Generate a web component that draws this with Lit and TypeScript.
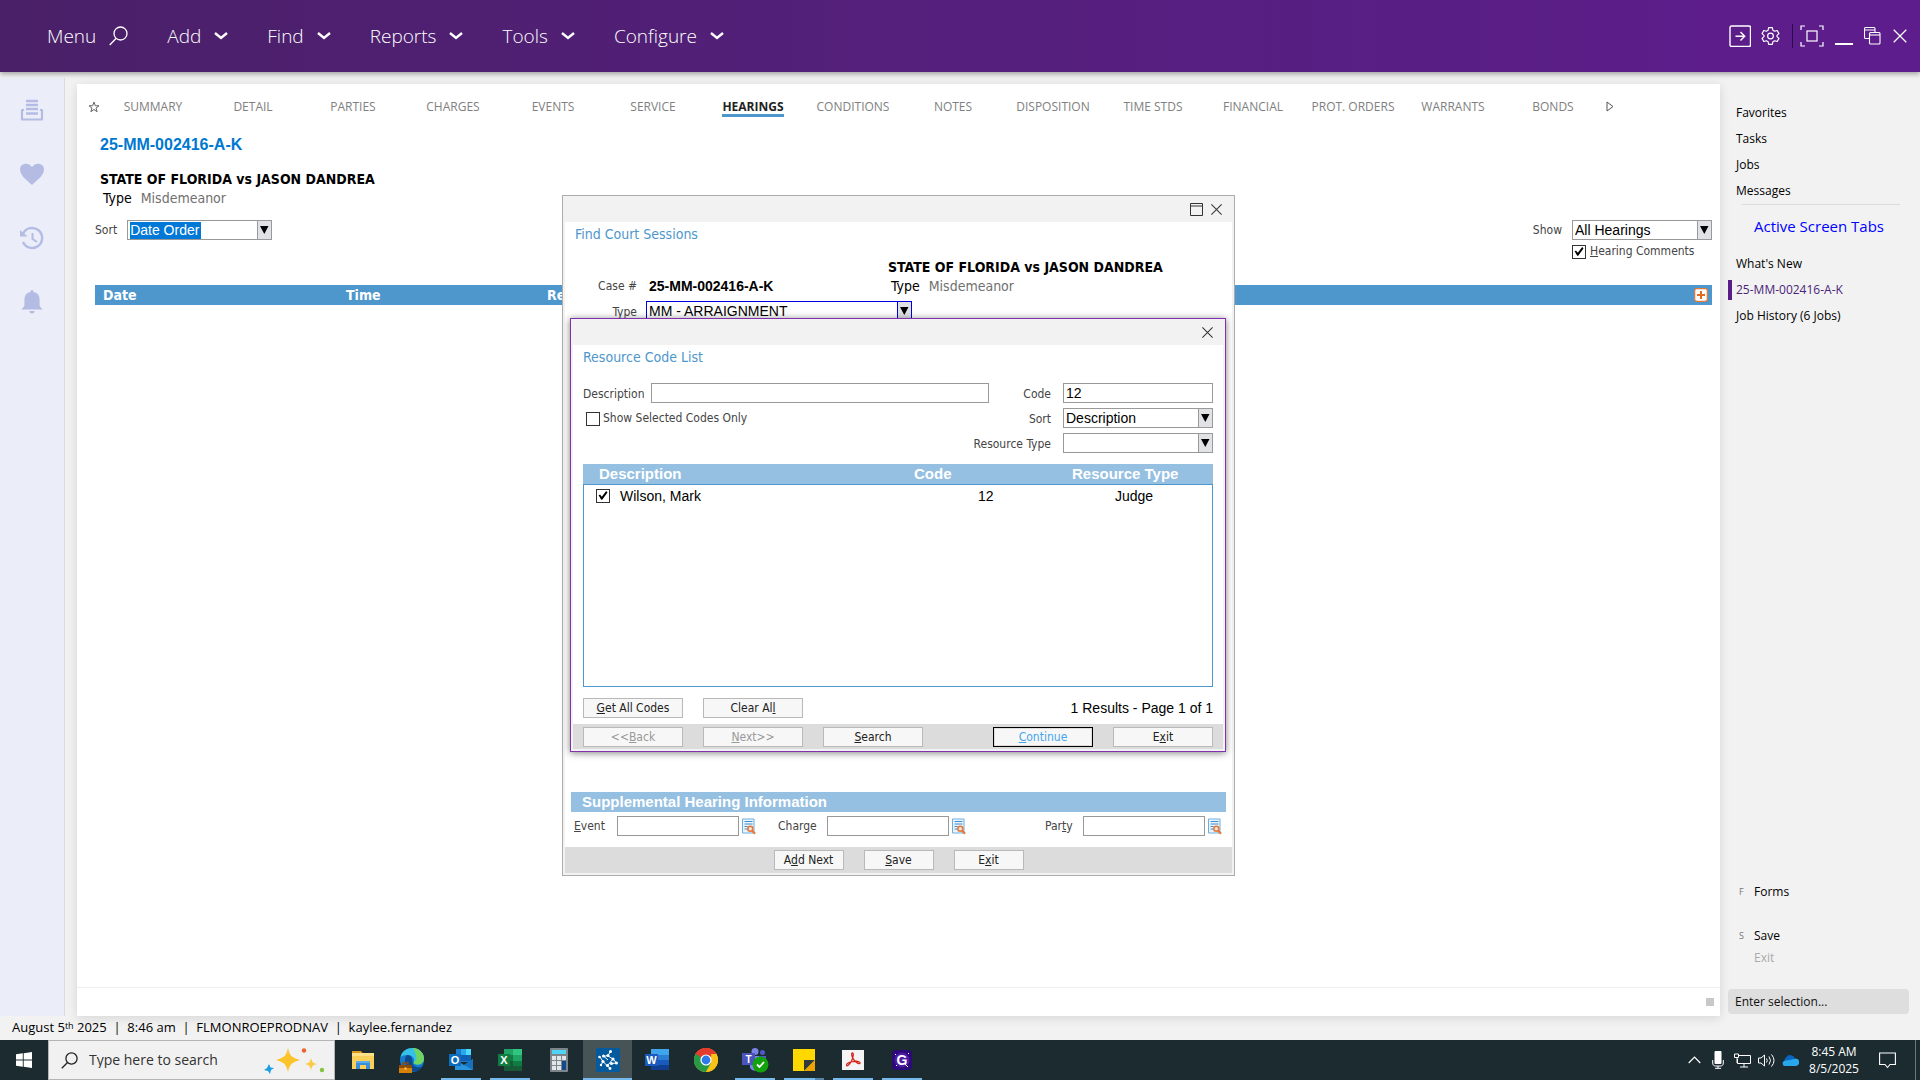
import { LitElement, html, css, svg } from "lit";
import { customElement, state } from "lit/decorators.js";
import { classMap } from "lit/directives/class-map.js";

const MENUS = ["Add", "Find", "Reports", "Tools", "Configure"];
const TABS = [
  "SUMMARY", "DETAIL", "PARTIES", "CHARGES", "EVENTS", "SERVICE", "HEARINGS", "CONDITIONS",
  "NOTES", "DISPOSITION", "TIME STDS", "FINANCIAL", "PROT. ORDERS", "WARRANTS", "BONDS",
];

const closeIcon = (size: number) => svg`<svg width=${size} height=${size} viewBox="0 0 14 14" fill="none" stroke="currentColor" stroke-width="1.1"><path d="M1.5 1.5l11 11M12.5 1.5l-11 11"/></svg>`;

const chevron = html`<svg width="14" height="10" viewBox="0 0 14 10" fill="none" stroke="currentColor" stroke-width="2.4"><path d="M1 2l6 5 6-5"/></svg>`;

const lookupIcon = html`<svg width="15" height="17" viewBox="0 0 15 17" fill="none">
  <path d="M1.5 1h11.5v14H1.5z" fill="#eaf4fc" stroke="#6aaee0"/>
  <path d="M3.5 3.5h8M3.5 6h8M3.5 8.5h3M3.5 11h3" stroke="#3f8fcb" stroke-width="1.2"/>
  <circle cx="9.3" cy="10.8" r="2.5" fill="#fbe3d6" stroke="#e5793c" stroke-width="1.6"/>
  <path d="M11 12.6l3 3.2" stroke="#e5793c" stroke-width="2.2"/></svg>`;

const railIcons = [
  html`<svg width="24" height="24" viewBox="0 0 24 24" fill="none"><path d="M6 3h12M6 7h12M6 11h12M6 15.500h12" stroke="currentColor" stroke-width="2.300"/><path d="M4 12H2v9.500h20V12h-2" stroke="currentColor" stroke-width="2.200" stroke-linejoin="round"/></svg>`,
  html`<svg width="26" height="24" viewBox="0 0 26 24" fill="currentColor"><path d="M13 23C9 19 1 14 1 7.500 1 1 9.500-.5 13 5 16.500-.5 25 1 25 7.500 25 14 17 19 13 23z"/></svg>`,
  html`<svg width="26" height="24" viewBox="0 0 26 24" fill="none" stroke="currentColor" stroke-width="2.400"><path d="M4.200 7.500A10 10 0 1 1 4 16"/><path d="M1 4v6.500h7.500z" fill="currentColor" stroke="none"/><path d="M13.500 7v6l4.500 3" stroke-width="2"/></svg>`,
  html`<svg width="24" height="26" viewBox="0 0 24 26" fill="currentColor"><path d="M12 1c1 0 1.600.7 1.600 2 4 .8 6 3.500 6 8v6l3 3.500H1.400l3-3.500v-6c0-4.500 2-7.200 6-8 0-1.300.6-2 1.600-2zM9.500 22h5a2.500 2.500 0 0 1-5 0z"/></svg>`,
];

const appIcons = {
  files: html`<svg width="24" height="24" viewBox="0 0 24 24"><path d="M1 3h9l2 2.500H1z" fill="#d99a1b"/><path d="M1 5h22v16H1z" fill="#fccf5b"/><path d="M1 5h22v3H1z" fill="#ffe08a"/><path d="M5 21v-8h14v8h-4v-4H9v4z" fill="#3b8fd8"/><path d="M5 13h14v2H5z" fill="#5badea"/></svg>`,
  edge: html`<svg width="26" height="26" viewBox="0 0 26 26"><circle cx="13" cy="13" r="12" fill="#1679c9"/><path d="M1.500 10C3 4 8 1 13.500 1 20 1 25 6 25 11.500c0 4-3 6-6.500 6-3 0-4.500-1.300-3.500-3 1-4-3-7-7-6.500-3 .3-5.500 1-6.500 2z" fill="#35c1e8"/><path d="M14 1c6.500.5 11 5 11 10.500 0 4-3 6-6.500 6-3 0-4.500-1.300-3.500-3 3 0 4-4-1-13.500z" fill="#6fd55f"/><path d="M8 8c-4 4-3 13 6 16.500 4 .6 8-2 9.500-5-5 2-10 0-10-4C13 12 13 8 8 8z" fill="#0c4a8f"/><path d="M0 18h13v8H0z" fill="#d98008"/><path d="M0 18h13v3H0z" fill="#8a4b08"/><path d="M4 18v-2h5v2" fill="none" stroke="#8a4b08" stroke-width="1.300"/><path d="M5.500 20.500h2v2h-2z" fill="#ffd76a"/></svg>`,
  outlook: html`<svg width="26" height="26" viewBox="0 0 26 26"><path d="M8 2h15v13H8z" fill="#1a7ad0"/><path d="M13 2h5v6h-5z" fill="#28a8ea"/><path d="M18 2h5v6h-5z" fill="#50d9ff"/><path d="M13 8h10v6H13z" fill="#0f5fb4"/><path d="M7 12l9 6 9-6v11H7z" fill="#2a94dd"/><path d="M25 12v11l-9-5z" fill="#1672bd"/><path d="M1 7h12v12H1z" fill="#0f6cbd"/><text x="7" y="17" text-anchor="middle" font-size="11" font-weight="700" font-family="Liberation Sans,sans-serif" fill="#fff">O</text></svg>`,
  excel: html`<svg width="26" height="26" viewBox="0 0 26 26"><path d="M7 2h18v22H7z" fill="#21a366"/><path d="M16 2h9v6h-9z" fill="#33c481"/><path d="M7 8h9v6H7z" fill="#107c41"/><path d="M7 14h18v10H7z" fill="#185c37"/><path d="M16 14h9v5h-9z" fill="#107c41"/><path d="M1 7h12v12H1z" fill="#107c41"/><text x="7" y="17" text-anchor="middle" font-size="11" font-weight="700" font-family="Liberation Sans,sans-serif" fill="#fff">X</text></svg>`,
  calc: html`<svg width="20" height="26" viewBox="0 0 20 26"><rect x="1" y="1" width="18" height="24" rx="1" fill="#7c858c"/><path d="M3 3h14v4H3z" fill="#4fd3f7"/><path d="M3 9h4v4H3zM8 9h4v4H8zM13 9h4v4h-4zM3 14h4v4H3zM8 14h4v4H8zM3 19h4v4H3zM8 19h4v4H8z" fill="#e3e6e8"/><path d="M13 14h4v9h-4z" fill="#124a8c"/></svg>`,
  court: html`<svg width="24" height="24" viewBox="0 0 24 24"><path d="M0 0h24v24H0z" fill="#045a9c"/><path d="M14.500 3.500L12 7.500l-4.500 1M8 8.500l4 3.500M4 9l3 4.500 4 4M12 8l5 3 3.500 4-5 .5M17 11l-5.500 6.500L14 20.500M7 13.500L5 17" fill="none" stroke="#fff" stroke-width="1"/><g fill="#fff"><circle cx="14.500" cy="3.500" r="1.500"/><circle cx="12" cy="7.500" r="1.500"/><circle cx="7.500" cy="8" r="1.500"/><circle cx="3.500" cy="9" r="1.300"/><circle cx="7" cy="13.500" r="1.600"/><circle cx="17" cy="11" r="1.600"/><circle cx="20.500" cy="15" r="1.500"/><circle cx="15.500" cy="15.500" r="1.600"/><circle cx="11.500" cy="17.500" r="1.600"/><circle cx="5" cy="17" r="1.200"/><circle cx="14" cy="20.500" r="1.400"/></g></svg>`,
  word: html`<svg width="26" height="26" viewBox="0 0 26 26"><path d="M7 2h18v6H7z" fill="#41a5ee"/><path d="M7 8h18v5H7z" fill="#2b7cd3"/><path d="M7 13h18v5H7z" fill="#185abd"/><path d="M7 18h18v5H7z" fill="#103f91"/><path d="M1 7h13v12H1z" fill="#185abd"/><text x="7.500" y="17" text-anchor="middle" font-size="11" font-weight="700" font-family="Liberation Sans,sans-serif" fill="#fff">W</text></svg>`,
  chrome: html`<svg width="24" height="24" viewBox="0 0 24 24"><circle cx="12" cy="12" r="12" fill="#fbc116"/><path d="M12 12L1.600 6A12 12 0 0 1 22.400 6z" fill="#e33b2e"/><path d="M12 6h10.400A12 12 0 0 0 1.600 6L7 15z" fill="#e33b2e"/><path d="M1.600 6A12 12 0 0 0 12 24l5.200-9L12 12z" fill="#269a45"/><path d="M22.400 6A12 12 0 0 1 12 24l5.200-9V6z" fill="#fbc116"/><circle cx="12" cy="12" r="5.600" fill="#fff"/><circle cx="12" cy="12" r="4.400" fill="#2f79e8"/></svg>`,
  teams: html`<svg width="28" height="26" viewBox="0 0 28 26"><circle cx="14" cy="4.500" r="3.500" fill="#7b83eb"/><circle cx="21.500" cy="5.500" r="2.500" fill="#5059c9"/><path d="M9 9h11v9a6 6 0 0 1-11 3z" fill="#7b83eb"/><path d="M18 9h7v7h-7z" fill="#5059c9"/><path d="M1 6h13v12H1z" fill="#4b53bc"/><text x="7.500" y="16" text-anchor="middle" font-size="10" font-weight="700" font-family="Liberation Sans,sans-serif" fill="#fff">T</text><circle cx="19.500" cy="17.500" r="8" fill="#13a10e"/><path d="M16 17.500l2.500 2.500 4.500-5" fill="none" stroke="#fff" stroke-width="1.800"/></svg>`,
  notes: html`<svg width="22" height="22" viewBox="0 0 22 22"><path d="M0 0h22v22H0z" fill="#ffd800"/><path d="M11 22V11h11z" fill="#333a3d"/><path d="M11 22l11-11v11z" fill="#eca400"/></svg>`,
  acrobat: html`<svg width="22" height="20" viewBox="0 0 22 20"><path d="M0 0h22v20H0z" fill="#f4f4f4"/><path d="M10 3c2-1 1.500 4-.5 8s-5 6-5 4 5-3.500 8.500-3.700 5.500.7 5 2-4-.8-6-3.300S9 4 10 3z" fill="none" stroke="#d6231c" stroke-width="1.300"/></svg>`,
  gapp: html`<svg width="20" height="20" viewBox="0 0 20 20"><rect width="20" height="20" rx="4" fill="#2c0a78"/><circle cx="10" cy="10" r="7.500" fill="#4d1ba5"/><text x="10" y="15" text-anchor="middle" font-size="14" font-weight="700" font-family="Liberation Sans,sans-serif" fill="#fff">G</text><path d="M3 4l1 1M16 3l1 1M4 16l1-1M13 14l3 3" stroke="#fff"/></svg>`,
};

const TASKS: { id: keyof typeof appIcons; name: string; open?: boolean; active?: boolean; stacked?: boolean }[] = [
  { id: "files", name: "File Explorer" },
  { id: "edge", name: "Edge" },
  { id: "outlook", name: "Outlook", open: true },
  { id: "excel", name: "Excel", open: true },
  { id: "calc", name: "Calculator" },
  { id: "court", name: "Court case manager", active: true },
  { id: "word", name: "Word" },
  { id: "chrome", name: "Chrome" },
  { id: "teams", name: "Teams", open: true },
  { id: "notes", name: "Sticky Notes", open: true, stacked: true },
  { id: "acrobat", name: "Acrobat", open: true },
  { id: "gapp", name: "G", open: true },
];

@customElement("app-root")
export class AppRoot extends LitElement {
  @state() private tab = "HEARINGS";

  static styles = css`
    :host {
      --seg: "Open Sans", "Noto Sans", sans-serif;
      --tah: "DejaVu Sans Condensed", "DejaVu Sans", sans-serif;
      --ari: "Liberation Sans", Arial, sans-serif;
      display: flex;
      flex-direction: column;
      min-height: 100vh;
      background: #f2f2f2;
      color: #000;
      font: 12px/16px var(--seg);
    }
    *, *::before, *::after { box-sizing: border-box; }
    button, input, select { font: inherit; color: inherit; margin: 0; padding: 0; border-radius: 0; }
    button { border: 0; background: none; display: inline-flex; align-items: center; justify-content: center; }
    a { color: inherit; text-decoration: none; }
    svg { display: block; flex: none; }
    h1, h2, p { margin: 0; }

    .top {
      display: flex;
      align-items: center;
      justify-content: space-between;
      height: 72px;
      padding: 0 12px 0 47px;
      background: linear-gradient(90deg, #4a2068, #561f80 60%, #5e1d8d);
      box-shadow: 0 2px 5px rgba(0, 0, 0, .35);
      color: #fff;
      z-index: 1;
    }
    .menus { display: flex; align-items: center; gap: 39px; }
    .menus button { font-size: 19px; font-weight: 300; line-height: 26px; gap: 13px; }
    .wins { display: flex; align-items: center; }
    .wins button { height: 24px; }
    .wins .bar { width: 1px; height: 24px; background: #2c0a4d; margin: 0 7px 0 12px; }
    .wins .gear { margin-left: 10px; }
    .wins .far { margin-left: 11px; }

    .work { flex: 1; display: flex; align-items: stretch; }
    .rail {
      display: flex;
      flex-direction: column;
      align-items: center;
      gap: 40px;
      flex: none;
      width: 65px;
      margin-top: 6px;
      padding-top: 20px;
      background: #ebeef8;
      border-right: 1px solid #d9dbe0;
      color: #b5bce3;
    }
    .rail button { width: 26px; height: 24px; }
    .card {
      position: relative;
      flex: 1;
      display: flex;
      flex-direction: column;
      margin: 12px 0 0 12px;
      background: #fff;
      box-shadow: 0 2px 10px rgba(0, 0, 0, .12);
    }
    .tabs { display: flex; align-items: flex-start; padding: 15px 0 0 7px; color: #808080; line-height: 15px; }
    .tabs .icon { width: 19px; height: 15px; }
    .tabs .more { justify-content: flex-start; padding-left: 3px; }
    .tabs .cell { flex: 0 1 100px; text-align: center; white-space: nowrap; }
    .tabs a { display: inline-block; border-bottom: 3px solid transparent; }
    .tabs a.on { color: #222; font-weight: 700; border-color: #4d97cd; }
    .casehead { padding: 18px 0 0 23px; }
    .casehead .num { font: bold 16px/20px var(--ari); color: #0078d0; margin-bottom: 15px; }
    .party { font: bold 14px/18px var(--tah); white-space: nowrap; }
    .kind { font: 14px/18px var(--tah); color: #707070; padding: 1px 0 0 3px; white-space: nowrap; }
    .kind b { font-weight: 400; color: #000; margin-right: 5px; }
    .filters { display: flex; justify-content: space-between; padding: 13px 8px 0 18px; }
    .lab { font: 12px/20px var(--tah); color: #444; white-space: nowrap; }
    .pair { display: flex; gap: 10px; align-items: flex-start; }
    .stack { display: grid; gap: 4px; width: 140px; }
    .check { display: flex; align-items: center; gap: 4px; font: 12px/15px var(--tah); color: #444; white-space: nowrap; }

    .combo { display: grid; }
    .combo select, .combo .arrow { grid-area: 1 / 1; }
    .combo select {
      appearance: none;
      width: 100%;
      height: 20px;
      padding: 1px 20px 0 2px;
      border: 1px solid #999;
      background: #fff;
      font: 14px/17px var(--ari);
      outline: 0;
    }
    .combo .arrow {
      justify-self: end;
      display: grid;
      place-items: center;
      width: 15px;
      height: 20px;
      border: 1px solid #999;
      background: #e1e2e6;
      pointer-events: none;
    }
    .combo.focus select, .combo.focus .arrow { border-color: #0000e0; }
    .combo.marked { width: 145px; }
    .combo.marked select { color: #fff; background: linear-gradient(#0078d7, #0078d7) 2px 1px / 71px 17px no-repeat #fff; }
    .text { width: 100%; height: 20px; border: 1px solid #999; background: #fff; padding: 0 2px; font: 14px/18px var(--ari); outline: 0; }
    .tick {
      appearance: none;
      display: grid;
      place-items: center;
      flex: none;
      width: 14px;
      height: 14px;
      border: 1px solid #333;
      background: #fff;
    }
    .tick:checked::before {
      content: "";
      width: 10px;
      height: 10px;
      background: #000;
      clip-path: polygon(5% 45%, 22% 42%, 38% 62%, 82% 5%, 95% 20%, 42% 92%, 32% 92%);
    }

    .hearings { border-collapse: collapse; width: calc(100% - 26px); margin: 26px 8px 0 18px; table-layout: fixed; background: #4d97cd; }
    .hearings th { height: 20px; padding: 0 0 0 8px; text-align: left; font: bold 14px/20px var(--tah); color: #fff; }
    .hearings .c1 { width: 243px; }
    .hearings .c2 { width: 201px; }
    .hearings .last { padding: 0 4px 0 0; }
    .hearings button { display: flex; margin-left: auto; }
    .foot { display: flex; align-items: center; justify-content: flex-end; height: 29px; margin-top: auto; padding-right: 6px; border-top: 1px solid #eee; }
    .foot i { width: 8px; height: 8px; background: #c8c8c8; }

    .side { flex: none; width: 200px; display: flex; flex-direction: column; padding: 31px 11px 2px 8px; }
    .side nav { display: grid; row-gap: 6px; line-height: 20px; }
    .side nav a { padding-left: 4px; border-left: 4px solid transparent; }
    .side nav a.on { color: #4b2478; border-color: #5a1d88; }
    .side hr { width: 159px; height: 1px; border: 0; background: #dcdcdc; margin: 3px 0 0 13px; }
    .side h2 { font: 15px/20px var(--seg); color: #00f; margin: 11px 0 18px 26px; white-space: nowrap; }
    .cmds { display: grid; grid-template-columns: 15px 1fr; margin: auto 0 20px 11px; line-height: 22px; }
    .cmds i { font-size: 9px; font-style: normal; color: #777; }
    .cmds .gap { margin-top: 22px; }
    .cmds .off { color: #aaa; grid-column: 2; justify-self: start; }
    .cmds button { justify-self: start; }
    .pick { height: 25px; border: 0; border-radius: 4px; background: #dedede; padding: 0 7px; font-size: 12px; }
    .pick::placeholder { color: #111; opacity: 1; }

    .win { position: absolute; display: flex; flex-direction: column; padding: 2px; background: #f2f2f2; border: 1px solid #acacac; }
    .sessions { top: 111px; left: 0; right: 0; margin: 0 auto; width: 673px; }
    .codes { top: 122px; left: 7px; right: 8px; border-color: #8330ad; box-shadow: 0 1px 7px rgba(0, 0, 0, .5); }
    .bar24 { display: flex; justify-content: flex-end; align-items: center; gap: 7px; height: 24px; padding: 0 9px 2px 0; color: #333; }
    .body { background: #fff; padding-top: 2px; display: flex; flex-direction: column; }
    .body h2 { font: 14px/20px var(--tah); color: #4d97cd; padding-left: 10px; }
    .facts { display: grid; grid-template-columns: 72px 1fr 344px; column-gap: 9px; padding-top: 14px; min-height: 548px; grid-template-rows: 18px 19px auto 1fr; }
    .facts .lab { text-align: right; }
    .facts .num { font: bold 14px/18px var(--ari); padding: 1px 0 0 3px; }
    .facts .combo { grid-column: 2 / 4; width: 266px; margin-top: 6px; }
    .facts .low { margin-top: 7px; }
    .strip { margin: 0 6px; padding-left: 11px; background: #95c0e2; color: #fff; font: bold 15px/20px var(--ari); }
    .extras { display: grid; grid-template-columns: 204px 1fr auto; padding: 4px 10px 11px 9px; }
    .extras .f { display: flex; align-items: center; gap: 2px; }
    .extras .text { width: 122px; }
    .extras .lab { width: 41px; }
    .extras .wide { width: 47px; }
    .extras .slim { width: 36px; }
    .acts { display: flex; justify-content: center; gap: 20px; padding: 3px 0; background: #dcdcdc; }
    .btn { height: 20px; border: 1px solid #b9b9b9; background: #f7f7f7; color: #222; font: 12px/18px var(--tah); width: 100px; white-space: pre; }
    .acts .btn { width: 70px; }
    .btn:disabled { color: #999; }
    .btn.go { border-color: #000; color: #45a5ee; box-shadow: inset 0 0 0 1px #ddd; }
    .query { display: grid; grid-template-columns: 68px 338px 1fr 150px; row-gap: 5px; padding: 16px 10px 11px; align-items: center; }
    .query .lab { line-height: 18px; padding-top: 2px; }
    .query .r { justify-self: end; padding-right: 12px; }
    .query .check { grid-column: 1 / 3; gap: 3px; padding: 1px 0 0 3px; }
    .query .both { grid-column: 1 / 4; }
    .list { border-spacing: 0; margin: 0 10px; table-layout: fixed; font: 14px/20px var(--ari); }
    .list th { height: 20px; padding: 0; text-align: left; background: #95c0e2; color: #fff; font-size: 15px; }
    .list td { height: 22px; padding: 0; vertical-align: middle; border-top: 1px solid #4d97cd; }
    .list th:first-child { padding-left: 16px; }
    .list td:first-child { border-left: 1px solid #4d97cd; padding-left: 12px; }
    .list td:last-child { border-right: 1px solid #4d97cd; }
    .list .a { width: 331px; }
    .list .b { width: 158px; }
    .list label { display: flex; align-items: center; gap: 10px; }
    .list .code { padding-left: 64px; }
    .list .res { padding-left: 43px; }
    .list .rest td { height: 181px; border-top: 0; border-bottom: 1px solid #4d97cd; }
    .tools { display: flex; gap: 20px; padding: 11px 10px 6px; }
    .tools p { margin-left: auto; font: 14px/20px var(--ari); }
    .nav { display: flex; gap: 20px; padding: 3px 10px 2px; background: #dcdcdc; }
    .nav .push { margin-left: auto; }

    .status { display: flex; height: 24px; padding: 1px 12px; line-height: 20px; font-size: 13px; white-space: pre; }
    .status sup { font-size: 9px; line-height: 1px; vertical-align: 3px; }
    .task { display: flex; align-items: stretch; height: 40px; background: #1b2b30; color: #fff; }
    .task .start { width: 48px; }
    .find { display: flex; align-items: center; width: 287px; padding: 0 8px 0 12px; gap: 11px; background: #f1f1f1; border: 1px solid #b5b5b5; color: #222; }
    .find input { flex: 1; min-width: 0; border: 0; background: none; outline: 0; font-size: 14px; }
    .find input::placeholder { color: #333; opacity: 1; }
    .apps { display: flex; padding-left: 3px; }
    .apps button { width: 49px; position: relative; }
    .apps .open::after { content: ""; position: absolute; left: 5px; right: 4px; bottom: 0; height: 2px; background: #76b9ed; }
    .apps .stacked::after { background: linear-gradient(90deg, #76b9ed 78%, #5585a8 78%); }
    .apps .active { background: #465458; }
    .apps .active::after { content: ""; position: absolute; left: 0; right: 0; bottom: 0; height: 2px; background: #76b9ed; }
    .tray { display: flex; align-items: center; margin-left: auto; }
    .tray time { width: 62px; text-align: center; line-height: 17px; font-size: 12px; margin: 0 4px 0 1px; }
    .tray .edge { align-self: stretch; width: 1px; background: #6a777b; margin: 0 4px 0 19px; }
    .tray .note { margin-left: 10px; }
    .tray .t { width: 24px; height: 40px; }
  `;

  private combo(id: string, value: string, cls = "") {
    return html`<span class="combo ${cls}">
      <select id=${id}><option>${value}</option></select>
      <span class="arrow"><svg width="9" height="8" viewBox="0 0 9 8"><path d="M0 0h8.500L4.300 8z"/></svg></span>
    </span>`;
  }

  private header() {
    return html`<header class="top">
      <nav class="menus">
        <button>Menu <svg width="19" height="20" viewBox="0 0 19 20" fill="none" stroke="#fff" stroke-width="1.300"><circle cx="11.500" cy="7.500" r="6.500"/><path d="M7 12.500L.7 19"/></svg></button>
        ${MENUS.map((m) => html`<button>${m} ${chevron}</button>`)}
      </nav>
      <div class="wins">
        <button aria-label="Sign out"><svg width="22" height="22" viewBox="0 0 22 22" fill="none" stroke="#fff" stroke-width="1.400"><rect x="1" y="1" width="20.500" height="20.500" rx="1.500"/><path d="M6.500 11.200h9M11.500 7l4.200 4.200-4.200 4.200"/></svg></button>
        <button class="gear" aria-label="Settings"><svg width="19" height="20" viewBox="0 0 24 24" fill="none" stroke="#fff" stroke-width="1.500"><circle cx="12" cy="12" r="3.600"/><path d="M9.700 1.500h4.600l.7 3.200 2.200 1.300 3.200-1 2.300 4-2.500 2.200v1.600l2.500 2.200-2.300 4-3.200-1-2.200 1.300-.7 3.200H9.700L9 19.300 6.800 18l-3.200 1-2.300-4 2.500-2.200v-1.600L1.300 9l2.300-4 3.200 1L9 4.700z" stroke-linejoin="round"/></svg></button>
        <span class="bar"></span>
        <button aria-label="Focus"><svg width="24" height="22" viewBox="0 0 24 22" fill="none" stroke="#fff" stroke-width="1.200"><path d="M1 5V1h4M19 1h4v4M23 17v4h-4M5 21H1v-4"/><rect x="7" y="6" width="10" height="10"/></svg></button>
        <button class="far" aria-label="Minimize"><svg width="18" height="22" viewBox="0 0 18 22"><path d="M0 18h18v2H0z" fill="#fff"/></svg></button>
        <button class="far" aria-label="Restore"><svg width="17" height="20" viewBox="0 0 17 20" fill="none" stroke="#fff" stroke-width="1.100"><path d="M5 12.500H1.500a1 1 0 0 1-1-1V2.500a1 1 0 0 1 1-1H10a1 1 0 0 1 1 1V6M.5 4H11"/><rect x="5.500" y="6.500" width="10.500" height="11.500" rx="1"/><path d="M5.500 9H16"/></svg></button>
        <button class="far" aria-label="Close">${closeIcon(16)}</button>
      </div>
    </header>`;
  }

  private codesDialog() {
    return html`<section class="win codes" role="dialog" aria-label="Resource Code List">
      <div class="bar24"><button aria-label="Close">${closeIcon(13)}</button></div>
      <div class="body">
        <h2>Resource Code List</h2>
        <div class="query">
          <label class="lab" for="desc">Description</label>
          <input class="text" id="desc" />
          <label class="lab r" for="code">Code</label>
          <input class="text" id="code" value="12" />
          <label class="check"><input class="tick" type="checkbox" />Show Selected Codes Only</label>
          <label class="lab r" for="sort2">Sort</label>
          ${this.combo("sort2", "Description")}
          <label class="lab r both" for="rtype">Resource Type</label>
          ${this.combo("rtype", "")}
        </div>
        <table class="list">
          <thead><tr><th class="a">Description</th><th class="b">Code</th><th>Resource Type</th></tr></thead>
          <tbody>
            <tr><td><label><input class="tick" type="checkbox" checked />Wilson, Mark</label></td><td class="code">12</td><td class="res">Judge</td></tr>
            <tr class="rest"><td></td><td></td><td></td></tr>
          </tbody>
        </table>
        <div class="tools">
          <button class="btn"><u>G</u>et All Codes</button>
          <button class="btn">Clear Al<u>l</u></button>
          <p>1 Results - Page 1 of 1</p>
        </div>
        <div class="nav">
          <button class="btn" disabled>&lt;&lt;<u>B</u>ack</button>
          <button class="btn" disabled><u>N</u>ext&gt;&gt;</button>
          <button class="btn"><u>S</u>earch</button>
          <button class="btn go push"><u>C</u>ontinue</button>
          <button class="btn">E<u>x</u>it</button>
        </div>
      </div>
    </section>`;
  }

  private sessionsDialog() {
    return html`<section class="win sessions" role="dialog" aria-label="Find Court Sessions">
      <div class="bar24">
        <button aria-label="Maximize"><svg width="13" height="13" viewBox="0 0 13 13" fill="none" stroke="currentColor"><path d="M.5.5h12v12H.5zM.5 3h12"/></svg></button>
        <button aria-label="Close">${closeIcon(13)}</button>
      </div>
      <div class="body">
        <h2>Find Court Sessions</h2>
        <div class="facts">
          <span></span><span></span><span class="party">STATE OF FLORIDA vs JASON DANDREA</span>
          <span class="lab">Case #</span><span class="num">25-MM-002416-A-K</span>
          <span class="kind"><b>Type</b> Misdemeanor</span>
          <label class="lab low" for="htype">Type</label>
          ${this.combo("htype", "MM - ARRAIGNMENT", "focus")}
        </div>
        <div class="strip">Supplemental Hearing Information</div>
        <div class="extras">
          <div class="f"><label class="lab" for="ev"><u>E</u>vent</label><input class="text" id="ev" /><button aria-label="Look up event">${lookupIcon}</button></div>
          <div class="f"><label class="lab wide" for="ch">Char<u>g</u>e</label><input class="text" id="ch" /><button aria-label="Look up charge">${lookupIcon}</button></div>
          <div class="f"><label class="lab slim" for="pa">Par<u>t</u>y</label><input class="text" id="pa" /><button aria-label="Look up party">${lookupIcon}</button></div>
        </div>
        <div class="acts">
          <button class="btn">A<u>d</u>d Next</button>
          <button class="btn"><u>S</u>ave</button>
          <button class="btn">E<u>x</u>it</button>
        </div>
      </div>
      ${this.codesDialog()}
    </section>`;
  }

  private sidebar() {
    return html`<aside class="side">
      <nav>
        <a href="#favorites">Favorites</a><a href="#tasks">Tasks</a><a href="#jobs">Jobs</a><a href="#messages">Messages</a>
      </nav>
      <hr />
      <h2>Active Screen Tabs</h2>
      <nav>
        <a href="#new">What's New</a><a class="on" href="#case">25-MM-002416-A-K</a><a href="#history">Job History (6 Jobs)</a>
      </nav>
      <div class="cmds">
        <i>F</i><button>Forms</button>
        <i class="gap">S</i><button class="gap">Save</button>
        <button class="off" disabled>Exit</button>
      </div>
      <input class="pick" placeholder="Enter selection..." aria-label="Enter selection" />
    </aside>`;
  }

  private taskbar() {
    return html`<footer class="task">
      <button class="start" aria-label="Start"><svg width="16" height="16" viewBox="0 0 16 16" fill="#fff"><path d="M0 2.300l6.800-1v6.300H0zM7.700 1.200L16 0v7.600H7.700zM0 8.400h6.800v6.300L0 13.700zM7.700 8.400H16V16l-8.300-1.200z"/></svg></button>
      <label class="find">
        <svg width="17" height="17" viewBox="0 0 17 17" fill="none" stroke="#222" stroke-width="1.300"><circle cx="10.500" cy="6.500" r="5.600"/><path d="M6.500 10.500L.8 16.200"/></svg>
        <input placeholder="Type here to search" aria-label="Search" />
        <svg width="62" height="32" viewBox="0 0 62 32"><path d="M24 4c2 8 3 9 12 12-9 3-10 4-12 12-2-8-3-9-12-12 9-3 10-4 12-12z" fill="#fdc32b"/><path d="M47 14c1 4 2 5 6 6-4 1-5 2-6 6-1-4-2-5-6-6 4-1 5-2 6-6z" fill="#fbcb47"/><path d="M5 20l1.500 3.500L10 24l-3 2-1 4-2-3-4-1 3-2z" fill="#1b9de2"/><circle cx="40" cy="6.500" r="2.200" fill="#f0602c"/><circle cx="58" cy="26" r="2.200" fill="#86c440"/></svg>
      </label>
      <div class="apps">
        ${TASKS.map((t) => html`<button aria-label=${t.name} class=${classMap({ open: !!t.open, active: !!t.active, stacked: !!t.stacked })}>${appIcons[t.id]}</button>`)}
      </div>
      <div class="tray">
        <button class="t" aria-label="Hidden icons"><svg width="13" height="8" viewBox="0 0 13 8" fill="none" stroke="#fff" stroke-width="1.200"><path d="M.7 7l5.800-5.800L12.300 7"/></svg></button>
        <button class="t" aria-label="Microphone"><svg width="12" height="18" viewBox="0 0 12 18"><rect x="2.500" y="0" width="7" height="13" rx="1" fill="#fff"/><path d="M.7 9v3c0 2 1 3 3 3h4.600c2 0 3-1 3-3V9M6 15v2.500M3 17.300h6" fill="none" stroke="#fff"/></svg></button>
        <button class="t" aria-label="Network"><svg width="17" height="15" viewBox="0 0 17 15" fill="none" stroke="#fff"><path d="M5 2.500h11.500v8H3.500V6M10 10.500v3.500M6 14h8M.5 1h4v3.500h-4zM3 4.500V10"/></svg></button>
        <button class="t" aria-label="Volume"><svg width="17" height="15" viewBox="0 0 17 15" fill="none" stroke="#fff"><path d="M.5 5h2.500L6.500 2v11L3 10H.5zM8.500 5.500q1.500 2 0 4M11 3.500q3 4 0 8M13.500 1.500q5 6 0 12"/></svg></button>
        <button class="t" aria-label="OneDrive"><svg width="17" height="11" viewBox="0 0 17 11"><path d="M4 9A4 4 0 0 1 4 2.500 5 5 0 0 1 13 3.500L9 8z" fill="#0a66c2"/><path d="M2.500 11a2.700 2.700 0 0 1 0-5.200L8 5l6-1.500a3.800 3.800 0 0 1 0 7.500z" fill="#28a8ea"/></svg></button>
        <time>8:45 AM<br />8/5/2025</time>
        <button class="note" aria-label="Notifications"><svg width="17" height="17" viewBox="0 0 17 17" fill="none" stroke="#fff" stroke-width="1.100"><path d="M.6 1h15.800v11.500H11L8.500 15.500 6 12.500H.6z"/></svg></button>
        <span class="edge"></span>
      </div>
    </footer>`;
  }

  render() {
    return html`
      ${this.header()}
      <div class="work">
        <div class="rail">
          ${railIcons.map((icon, i) => html`<button aria-label=${["Print", "Favorites", "History", "Alerts"][i]}>${icon}</button>`)}
        </div>
        <main class="card">
          <nav class="tabs">
            <button class="icon" aria-label="Favorite"><svg width="12" height="12" viewBox="0 0 24 24" fill="none" stroke="#666" stroke-width="2"><path d="M12 2l2.600 7.500H22l-6 4.600 2.300 7.400L12 17l-6.300 4.500L8 14.100 2 9.500h7.400z"/></svg></button>
            ${TABS.map((t) => html`<span class="cell"><a href="#${t}" class=${classMap({ on: t === this.tab })} @click=${(e: Event) => { e.preventDefault(); this.tab = t; }}>${t}</a></span>`)}
            <button class="icon more" aria-label="More tabs"><svg width="8" height="11" viewBox="0 0 8 11" fill="none" stroke="#555"><path d="M1 1v9l6-4.500z"/></svg></button>
          </nav>
          <div class="casehead">
            <h1 class="num">25-MM-002416-A-K</h1>
            <p class="party">STATE OF FLORIDA vs JASON DANDREA</p>
            <p class="kind"><b>Type</b> Misdemeanor</p>
          </div>
          <div class="filters">
            <div class="pair"><label class="lab" for="sort">Sort</label>${this.combo("sort", "Date Order", "marked")}</div>
            <div class="pair">
              <label class="lab" for="show">Show</label>
              <div class="stack">
                ${this.combo("show", "All Hearings")}
                <label class="check"><input class="tick" type="checkbox" checked /><span><u>H</u>earing Comments</span></label>
              </div>
            </div>
          </div>
          <table class="hearings">
            <thead><tr><th class="c1">Date</th><th class="c2">Time</th><th>Result</th>
              <th class="last"><button aria-label="Add hearing"><svg width="14" height="14" viewBox="0 0 14 14"><rect x=".7" y=".7" width="12.600" height="12.600" rx="2" fill="#fff" stroke="#e0783c" stroke-width="1.200"/><path d="M7 3v8M3 7h8" stroke="#e56a1e" stroke-width="2"/></svg></button></th></tr></thead>
          </table>
          <div class="foot"><i></i></div>
          ${this.sessionsDialog()}
        </main>
        ${this.sidebar()}
      </div>
      <div class="status"><span>August 5<sup>th</sup> 2025  |  8:46 am  |  FLMONROEPRODNAV  |  kaylee.fernandez</span></div>
      ${this.taskbar()}
    `;
  }
}
